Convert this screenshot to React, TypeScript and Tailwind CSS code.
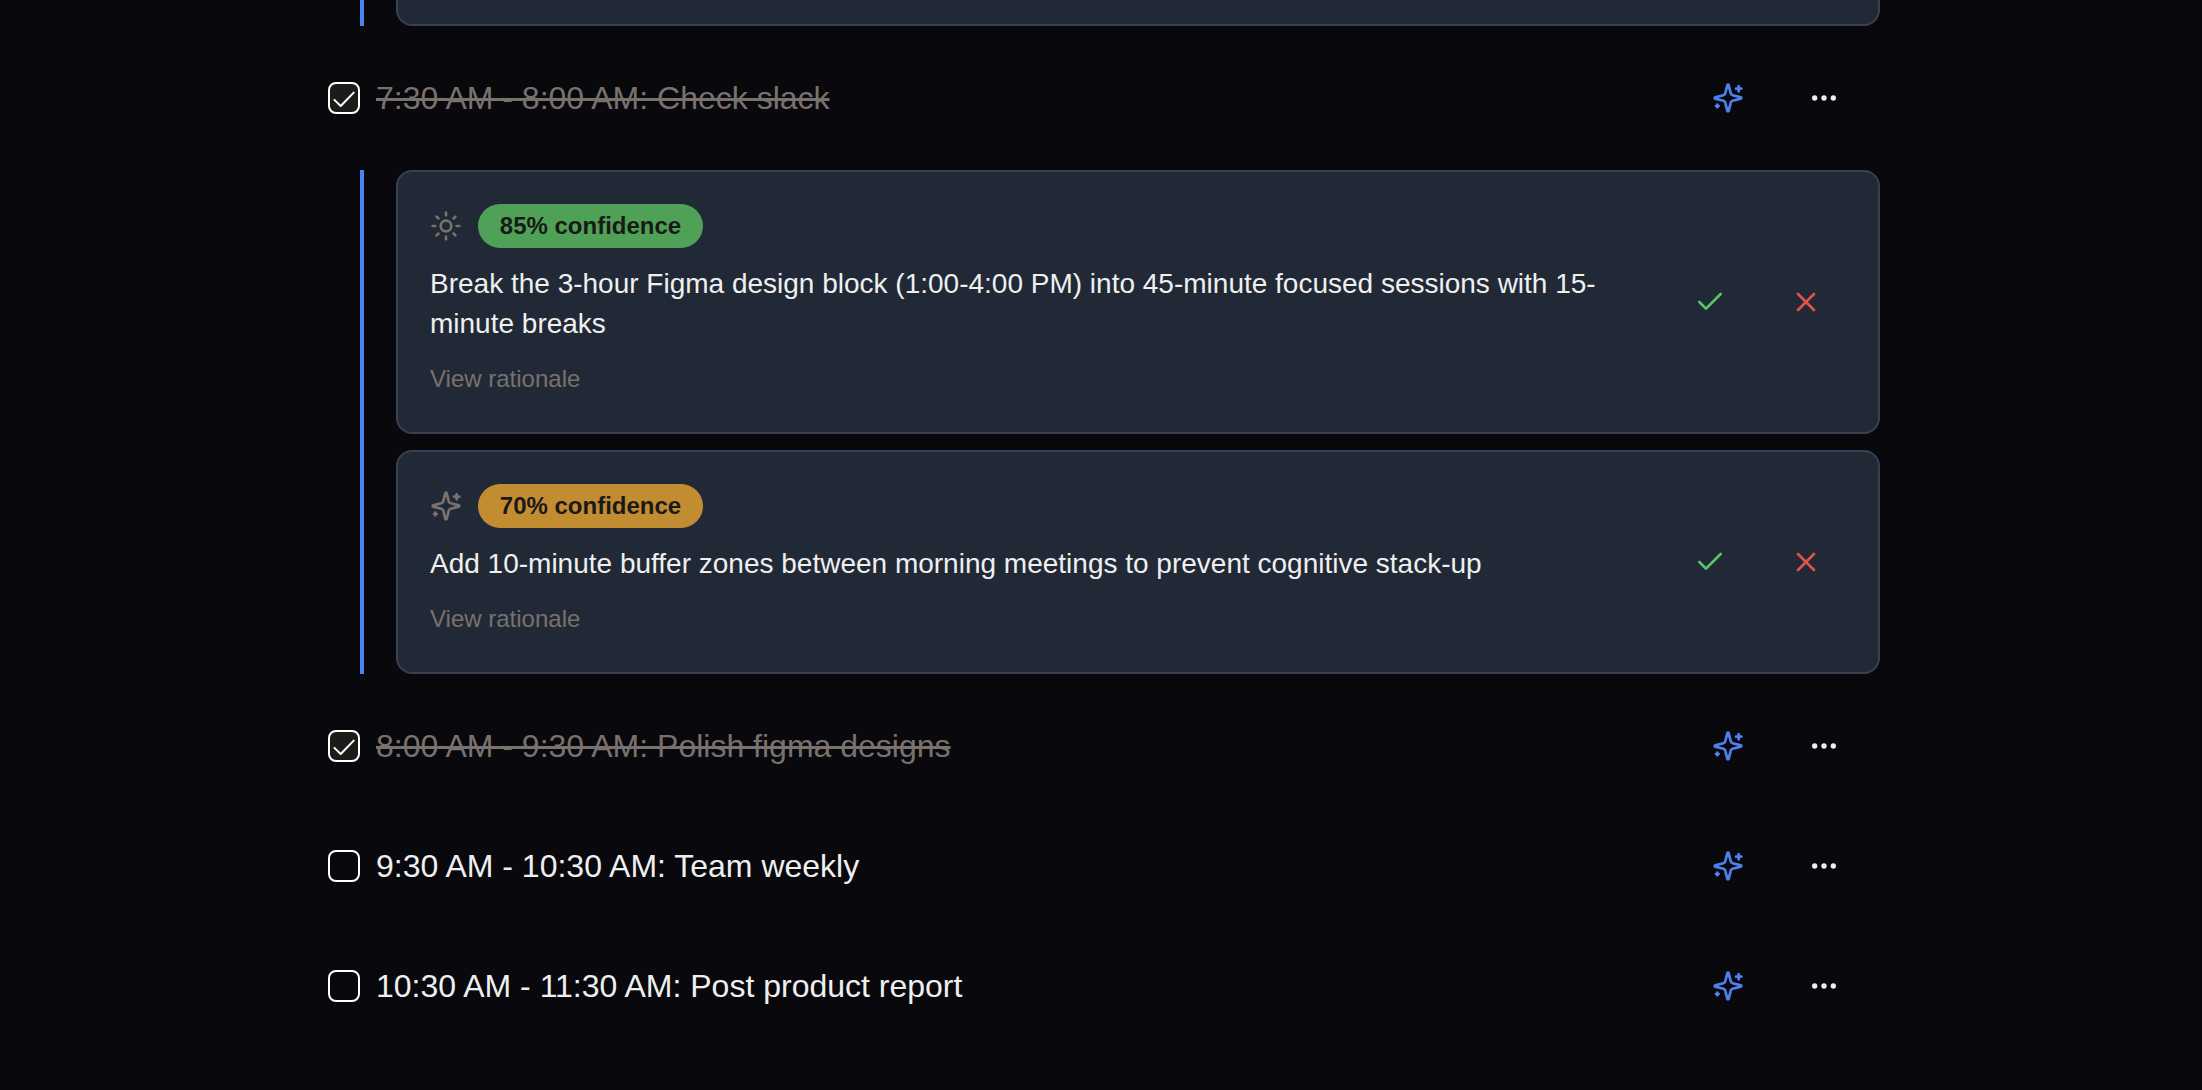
import React from 'react'
import { Check, Ellipsis, Sun, X } from 'lucide-react'

function Sparkles({ className = '' }: { className?: string }) {
  return (
    <svg
      className={`size-8 shrink-0 ${className}`}
      viewBox="0 0 24 24"
      fill="none"
      stroke="currentColor"
      strokeWidth="2"
      strokeLinecap="round"
      strokeLinejoin="round"
    >
      <path d="M9.937 15.5A2 2 0 0 0 8.5 14.063l-6.135-1.582a.5.5 0 0 1 0-.962L8.5 9.936A2 2 0 0 0 9.937 8.5l1.582-6.135a.5.5 0 0 1 .963 0L14.063 8.5A2 2 0 0 0 15.5 9.937l6.135 1.581a.5.5 0 0 1 0 .964L15.5 14.063a2 2 0 0 0-1.437 1.437l-1.582 6.135a.5.5 0 0 1-.963 0z" />
      <path d="M20 3v4" />
      <path d="M22 5h-4" />
      <path d="M4 17v2" />
      <path d="M5 18H3" />
    </svg>
  )
}

function Checkbox({ checked }: { checked: boolean }) {
  return (
    <button
      role="checkbox"
      aria-checked={checked}
      className={`flex size-8 shrink-0 items-center justify-center rounded-lg border-2 border-white text-white ${checked ? 'bg-[#1c1b19]' : ''}`}
    >
      {checked && (
        <svg
          className="size-7 shrink-0"
          viewBox="0 0 28 28"
          fill="none"
          stroke="currentColor"
          strokeWidth="2"
          strokeLinecap="round"
          strokeLinejoin="round"
        >
          <path d="M4.4 15.9 10.7 22 23.7 8.6" />
        </svg>
      )}
    </button>
  )
}

function TaskRow({ label, done = false }: { label: string; done?: boolean }) {
  return (
    <div className="flex h-24 items-center justify-between pr-4">
      <div className="flex items-center gap-4">
        <Checkbox checked={done} />
        <span
          className={`text-[32px] leading-[48px] whitespace-nowrap ${done ? 'text-[#78716c] line-through decoration-[3px]' : 'text-[#efefef]'}`}
        >
          {label}
        </span>
      </div>
      <div className="flex gap-4">
        <button className="flex size-20 items-center justify-center text-[#4e80ee]">
          <Sparkles />
        </button>
        <button className="flex size-20 items-center justify-center text-[#efefef]">
          <Ellipsis className="size-8" />
        </button>
      </div>
    </div>
  )
}

function SuggestionCard({
  icon,
  confidence,
  badgeClass,
  text,
}: {
  icon: React.ReactNode
  confidence: number
  badgeClass: string
  text: string
}) {
  return (
    <div className="flex items-center justify-between rounded-2xl border-2 border-[#394150] bg-[#222936] p-8">
      <div className="flex w-[1208px] flex-col items-start">
        <div className="flex items-center gap-4 text-[#78716c]">
          {icon}
          <span
            className={`flex h-11 w-[225px] items-center justify-center rounded-full text-2xl leading-8 font-bold text-[#1a1917] ${badgeClass}`}
          >
            {confidence}% confidence
          </span>
        </div>
        <p className="mt-4 text-[28px] leading-10 text-[#efefef]">{text}</p>
        <button className="mt-4 h-10 pb-[3px] text-2xl leading-8 text-[#78716c]">View rationale</button>
      </div>
      <div className="flex gap-4">
        <button className="flex size-20 items-center justify-center text-[#5ac46a]">
          <Check className="size-8" />
        </button>
        <button className="flex size-20 items-center justify-center text-[#e0524a]">
          <X className="size-8" />
        </button>
      </div>
    </div>
  )
}

export default function App() {
  return (
    <main
      className="h-[1090px] overflow-hidden bg-[#08080d] text-[#efefef]"
      style={{ fontFamily: '"Liberation Sans", Arial, sans-serif' }}
    >
      <div className="ml-[328px] flex w-[1552px] flex-col gap-6">
        <div className="ml-8 h-[26px] border-l-4 border-[#4e80ee] pl-8">
          <div className="h-full rounded-b-2xl border-x-2 border-b-2 border-[#394150] bg-[#222936]" />
        </div>
        <TaskRow label="7:30 AM - 8:00 AM: Check slack" done />
        <div className="ml-8 flex flex-col gap-4 border-l-4 border-[#4e80ee] pl-8">
          <SuggestionCard
            icon={<Sun className="size-8" />}
            confidence={85}
            badgeClass="bg-[#4ea156]"
            text="Break the 3-hour Figma design block (1:00-4:00 PM) into 45-minute focused sessions with 15-minute breaks"
          />
          <SuggestionCard
            icon={<Sparkles />}
            confidence={70}
            badgeClass="bg-[#c28c31]"
            text="Add 10-minute buffer zones between morning meetings to prevent cognitive stack-up"
          />
        </div>
        <TaskRow label="8:00 AM - 9:30 AM: Polish figma designs" done />
        <TaskRow label="9:30 AM - 10:30 AM: Team weekly" />
        <TaskRow label="10:30 AM - 11:30 AM: Post product report" />
      </div>
    </main>
  )
}
